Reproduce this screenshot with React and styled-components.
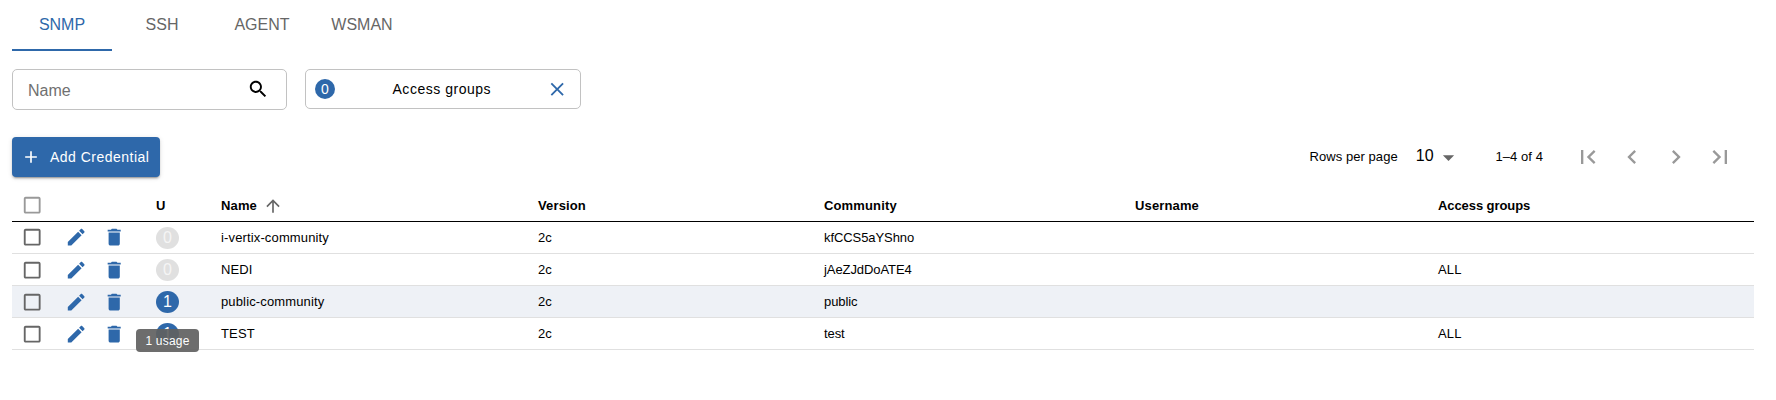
import React from "react";
import styled, { createGlobalStyle } from "styled-components";

const blue = "#2e68aa";

const GlobalStyle = createGlobalStyle`
  * { box-sizing: border-box; }
  body {
    margin: 0;
    background: #fff;
    color: #000;
    font-family: "Liberation Sans", Arial, sans-serif;
    font-size: 13px;
  }
  button { font-family: inherit; cursor: pointer; }
`;

const Page = styled.main`
  width: 1742px;
  min-height: 100vh;
  margin-left: 12px;
  display: flex;
  flex-direction: column;
`;

const Svg = styled.svg`
  display: block;
  flex: none;
  width: ${(p) => p.$size}px;
  height: ${(p) => p.$size}px;
  fill: currentColor;
`;

const paths = {
  search:
    "M15.5 14h-.79l-.28-.27C15.41 12.59 16 11.11 16 9.5 16 5.91 13.09 3 9.5 3S3 5.91 3 9.5 5.91 16 9.5 16c1.61 0 3.09-.59 4.23-1.57l.27.28v.79l5 4.99L20.49 19l-4.99-5zm-6 0C7.01 14 5 11.99 5 9.5S7.01 5 9.5 5 14 7.01 14 9.5 11.99 14 9.5 14z",
  close:
    "M19 6.41L17.59 5 12 10.59 6.41 5 5 6.41 10.59 12 5 17.59 6.41 19 12 13.41 17.59 19 19 17.59 13.41 12z",
  add: "M19 13h-6v6h-2v-6H5v-2h6V5h2v6h6v2z",
  up: "M4 12l1.41 1.41L11 7.83V20h2V7.83l5.58 5.59L20 12l-8-8-8 8z",
  box: "M19 5v14H5V5h14m0-2H5c-1.1 0-2 .9-2 2v14c0 1.1.9 2 2 2h14c1.1 0 2-.9 2-2V5c0-1.1-.9-2-2-2z",
  edit: "M3 17.25V21h3.75L17.81 9.94l-3.75-3.75L3 17.25zM20.71 7.04c.39-.39.39-1.02 0-1.41l-2.34-2.34c-.39-.39-1.02-.39-1.41 0l-1.83 1.83 3.75 3.75 1.83-1.83z",
  trash:
    "M6 19c0 1.1.9 2 2 2h8c1.1 0 2-.9 2-2V7H6v12zM19 4h-3.5l-1-1h-5l-1 1H5v2h14V4z",
  drop: "M7 10l5 5 5-5z",
  first: "M18.41 16.59L13.82 12l4.59-4.59L17 6l-6 6 6 6zM6 6h2v12H6z",
  prev: "M15.41 7.41L14 6l-6 6 6 6 1.41-1.41L10.83 12z",
  next: "M10 6L8.59 7.41 13.17 12l-4.58 4.59L10 18l6-6z",
  last: "M5.59 7.41L10.18 12l-4.59 4.59L7 18l6-6-6-6zM16 6h2v12h-2z",
};

const Icon = ({ name, size = 22.4 }) => (
  <Svg viewBox="0 0 24 24" $size={size} aria-hidden="true">
    <path d={paths[name]} />
  </Svg>
);

const Tabs = styled.nav`
  display: flex;
  height: 51px;
`;

const Tab = styled.button`
  width: 100px;
  height: 51px;
  border: 0;
  border-bottom: 2px solid ${(p) => (p.$active ? blue : "transparent")};
  background: none;
  padding: 1px 0 0;
  font-size: 16px;
  color: ${(p) => (p.$active ? blue : "#666")};
`;

const Filters = styled.div`
  display: flex;
  align-items: flex-start;
  gap: 18px;
  margin-top: 18px;
`;

const SearchField = styled.label`
  display: flex;
  align-items: center;
  width: 275px;
  height: 41px;
  padding: 0 17px 0 15px;
  border: 1px solid #c2c2c2;
  border-radius: 5px;
`;

const SearchInput = styled.input`
  flex: 1;
  min-width: 0;
  border: 0;
  outline: 0;
  padding: 2px 0 0;
  background: none;
  font: 16px "Liberation Sans", Arial, sans-serif;
  &::placeholder { color: #707070; opacity: 1; }
`;

const SearchIcon = styled.span`
  padding-bottom: 1px;
`;

const GroupFilter = styled.button`
  display: flex;
  align-items: center;
  justify-content: space-between;
  width: 276px;
  height: 40px;
  padding: 0 12px 0 9px;
  border: 1px solid #c2c2c2;
  border-radius: 5px;
  background: #fff;
  color: #000;
  font-size: 14px;
  letter-spacing: 0.52px;
`;

const GroupLabel = styled.span`
  padding-left: 3px;
`;

const Count = styled.span`
  width: 20px;
  height: 20px;
  border-radius: 50%;
  background: ${blue};
  color: #fff;
  line-height: 20px;
  text-align: center;
  letter-spacing: 0;
`;

const ClearIcon = styled.span`
  color: ${blue};
`;

const Toolbar = styled.div`
  display: flex;
  align-items: center;
  justify-content: space-between;
  height: 40px;
  margin-top: 27px;
`;

const AddButton = styled.button`
  display: flex;
  align-items: center;
  gap: 9px;
  width: 148px;
  height: 40px;
  padding: 0 0 0 9px;
  border: 0;
  border-radius: 4px;
  background: ${blue};
  color: #fff;
  font-size: 14px;
  letter-spacing: 0.48px;
  white-space: nowrap;
  box-shadow: 0 3px 1px -2px rgba(0, 0, 0, 0.2), 0 2px 2px rgba(0, 0, 0, 0.14),
    0 1px 5px rgba(0, 0, 0, 0.12);
`;

const Pagination = styled.div`
  display: flex;
  align-items: center;
  padding-right: 12px;
`;

const RowsLabel = styled.span`
  padding-bottom: 1px;
  letter-spacing: 0.06px;
`;

const PageSize = styled.span`
  display: flex;
  align-items: center;
  margin: 0 34px 0 18px;
  font-size: 16px;
  padding-bottom: 2px;
  svg { color: #666; margin-left: 1px; position: relative; top: 1px; }
`;

const PageButtons = styled.div`
  display: flex;
  margin-left: 23px;
`;

const PageButton = styled.button`
  padding: 8px;
  border: 0;
  background: none;
  color: #999;
`;

const Table = styled.div`
  margin-top: 13px;
`;

const Row = styled.div`
  display: grid;
  grid-template-columns: 45px 38px 59px 67px 317px 286px 311px 303px 1fr;
  align-items: center;
  height: 32px;
  border-bottom: 1px solid ${(p) => (p.$head ? "#000" : "#e0e0e0")};
  background: ${(p) => (p.$hover ? "#eef1f6" : "transparent")};
  font-weight: ${(p) => (p.$head ? 700 : 400)};
`;

const Cell = styled.span`
  display: flex;
  align-items: center;
  gap: 6px;
  padding-left: ${(p) => p.$indent || 0}px;
  white-space: nowrap;
  letter-spacing: ${(p) => (p.$tight ? "-0.08px" : "0.14px")};
  svg { color: #666; }
`;

const CheckCell = styled.span`
  padding-left: 9px;
  padding-top: ${(p) => (p.$low ? 1 : 0)}px;
  color: ${(p) => (p.$dim ? "#999" : "#666")};
`;

const ActionCell = styled.span`
  padding-left: 8px;
  padding-top: ${(p) => (p.$low ? 1 : 0)}px;
  color: ${blue};
`;

const UsageCell = styled.span`
  position: relative;
  padding-left: 2px;
  padding-top: ${(p) => (p.$low ? 1 : 0)}px;
`;

const Usage = styled.span`
  display: block;
  width: 23px;
  height: 22px;
  border-radius: 50%;
  background: ${(p) => (p.$used ? blue : "#e0e0e0")};
  color: ${(p) => (p.$used ? "#fff" : "#f5f5f5")};
  font-size: 16px;
  line-height: 22px;
  text-align: center;
`;

const Tooltip = styled.span`
  position: absolute;
  z-index: 1;
  top: 39px;
  left: -18px;
  width: 63px;
  height: 23px;
  border-radius: 4px;
  background: rgba(97, 97, 97, 0.92);
  color: #fff;
  font-size: 12px;
  letter-spacing: 0.2px;
  line-height: 24px;
  text-align: center;
  white-space: nowrap;
`;

const credentials = [
  { name: "i-vertix-community", usage: 0, community: "kfCCS5aYShno", groups: "" },
  { name: "NEDI", usage: 0, community: "jAeZJdDoATE4", groups: "ALL" },
  { name: "public-community", usage: 1, community: "public", groups: "", hover: true },
  { name: "TEST", usage: 1, community: "test", groups: "ALL" },
];

export default function App() {
  return (
    <Page>
      <GlobalStyle />
      <Tabs>
        {["SNMP", "SSH", "AGENT", "WSMAN"].map((t, i) => (
          <Tab key={t} $active={i === 0}>{t}</Tab>
        ))}
      </Tabs>
      <Filters>
        <SearchField>
          <SearchInput placeholder="Name" />
          <SearchIcon><Icon name="search" /></SearchIcon>
        </SearchField>
        <GroupFilter>
          <Count>0</Count>
          <GroupLabel>Access groups</GroupLabel>
          <ClearIcon><Icon name="close" /></ClearIcon>
        </GroupFilter>
      </Filters>
      <Toolbar>
        <AddButton>
          <Icon name="add" size={20} />
          Add Credential
        </AddButton>
        <Pagination>
          <RowsLabel>Rows per page</RowsLabel>
          <PageSize>
            10
            <Icon name="drop" size={27} />
          </PageSize>
          <RowsLabel>1–4 of 4</RowsLabel>
          <PageButtons>
            {["first", "prev", "next", "last"].map((n) => (
              <PageButton key={n} aria-label={n}><Icon name={n} size={28} /></PageButton>
            ))}
          </PageButtons>
        </Pagination>
      </Toolbar>
      <Table>
        <Row $head>
          <CheckCell $dim><Icon name="box" /></CheckCell>
          <span />
          <span />
          <Cell $indent={2}>U</Cell>
          <Cell>Name <Icon name="up" size={20} /></Cell>
          <Cell>Version</Cell>
          <Cell>Community</Cell>
          <Cell>Username</Cell>
          <Cell $tight>Access groups</Cell>
        </Row>
        {credentials.map((c, i) => (
          <Row key={c.name} $hover={c.hover}>
            <CheckCell $low={i > 0}><Icon name="box" /></CheckCell>
            <ActionCell $low={i > 0}><Icon name="edit" /></ActionCell>
            <ActionCell $low={i > 0}><Icon name="trash" /></ActionCell>
            <UsageCell $low={i > 0}>
              <Usage $used={c.usage > 0}>{c.usage}</Usage>
              {c.hover && <Tooltip>{c.usage} usage</Tooltip>}
            </UsageCell>
            <Cell>{c.name}</Cell>
            <Cell>2c</Cell>
            <Cell $tight>{c.community}</Cell>
            <Cell />
            <Cell>{c.groups}</Cell>
          </Row>
        ))}
      </Table>
    </Page>
  );
}
